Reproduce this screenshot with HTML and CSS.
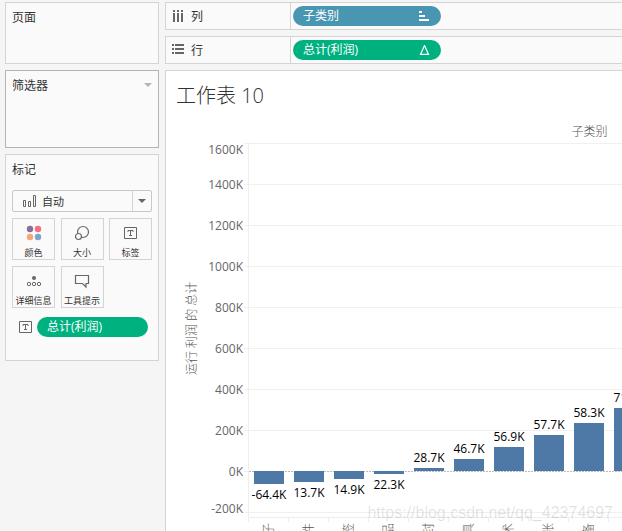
FILE: index.html
```
<!DOCTYPE html>
<html lang="zh-CN">
<head>
  <meta charset="utf-8">
  <title>工作表 10</title>
  <link rel="stylesheet" href="styles.css">
</head>
<body>
  <aside class="sidebar">
    <section class="card pages"><h2>页面</h2></section>
    <section class="card filters">
      <h2>筛选器</h2>
      <button class="card-menu" aria-label="筛选器菜单"><svg width="8" height="4"><path d="M0 0h8L4 4z" fill="#b4b4b4"/></svg></button>
    </section>
    <section class="card marks">
      <h2>标记</h2>
      <div class="mark-type">
        <svg width="14" height="13" fill="none" stroke="#666"><path d="M.5 5.500h2v6h-2zM5.500 6.500h2v5h-2zM10.500 .5h2v11h-2z"/></svg>
        <select aria-label="标记类型"><option>自动</option></select>
        <svg class="arrow" width="8" height="4"><path d="M0 0h8L4 4z" fill="#666"/></svg>
      </div>
      <div class="mark-buttons">
        <button>
          <svg width="16" height="16"><circle cx="4" cy="4" r="3.200" fill="#85709b"/><circle cx="12" cy="4" r="3.200" fill="#fa6c80"/><circle cx="4" cy="12" r="3.200" fill="#f6a678"/><circle cx="12" cy="12" r="3.200" fill="#7fa2ce"/></svg>
          颜色
        </button>
        <button>
          <svg width="16" height="16" fill="none" stroke="#666" stroke-width="1.200"><circle cx="9" cy="7" r="5.500"/><circle cx="4.500" cy="11.500" r="3" fill="#fafafa"/></svg>
          大小
        </button>
        <button>
          <svg width="16" height="16" fill="none" stroke="#666"><path d="M1.500 2.500h12v11h-12zM5 7V5.500h5V7M7.500 5.500v5M6 10.500h3"/></svg>
          标签
        </button>
        <button>
          <svg width="16" height="16" fill="none" stroke="#666"><circle cx="8" cy="5" r="2" fill="#666" stroke="none"/><circle cx="3" cy="11" r="1.700"/><circle cx="8" cy="11" r="1.700"/><circle cx="13" cy="11" r="1.700"/></svg>
          详细信息
        </button>
        <button>
          <svg width="16" height="16" fill="none" stroke="#666" stroke-width="1.200"><path d="M1.500 2.500h13v8h-2.500v3.500L8.500 10.500h-7z"/></svg>
          工具提示
        </button>
      </div>
      <div class="mark-field">
        <svg width="14" height="12" fill="none" stroke="#666"><path d="M.5.5h12v11H.5zM4 5V3.500h5V5M6.500 3.500v5M5 8.500h3"/></svg>
        <button class="pill green">总计(利润)</button>
      </div>
    </section>
  </aside>

  <main>
    <div class="shelf">
      <div class="shelf-name">
        <svg width="12" height="12" fill="#666"><path d="M1 0h2v2H1zM5 0h2v2H5zM9 0h2v2H9zM1 3h2v9H1zM5 3h2v9H5zM9 3h2v9H9z"/></svg>
        列
      </div>
      <button class="pill blue">子类别
        <svg width="12" height="10" fill="#fff"><path d="M0 0h3v2H0zM0 4h6v2H0zM0 8h10v2H0z"/></svg>
      </button>
    </div>
    <div class="shelf">
      <div class="shelf-name">
        <svg width="12" height="12" fill="#666"><path d="M0 0h2v2H0zM0 4h2v2H0zM0 8h2v2H0zM3 0h9v2H3zM3 4h9v2H3zM3 8h9v2H3z"/></svg>
        行
      </div>
      <button class="pill green">总计(利润)
        <svg width="12" height="10" fill="none" stroke="#fff" stroke-width="1.200"><path d="M5.500 .5L9.500 9.400h-8z"/></svg>
      </button>
    </div>

    <section class="sheet">
      <h1>工作表 10</h1>
      <div class="chart">
        <div class="axis-title">运行 利润 的 总计</div>
        <ul class="ticks">
          <li>1600K</li><li>1400K</li><li>1200K</li><li>1000K</li><li>800K</li>
          <li>600K</li><li>400K</li><li>200K</li><li>0K</li><li>-200K</li>
        </ul>
        <div class="view">
          <div class="col-title">子类别</div>
          <div class="plot">
            <div class="cols">
              <div class="col neg"><span class="bar" style="height:13px"></span><span>-64.4K</span></div>
              <div class="col neg"><span class="bar" style="height:11px"></span><span>13.7K</span></div>
              <div class="col neg"><span class="bar" style="height:8px"></span><span>14.9K</span></div>
              <div class="col neg"><span class="bar" style="height:3px"></span><span>22.3K</span></div>
              <div class="col"><span>28.7K</span><span class="bar" style="height:3px"></span></div>
              <div class="col"><span>46.7K</span><span class="bar" style="height:12px"></span></div>
              <div class="col"><span>56.9K</span><span class="bar" style="height:24px"></span></div>
              <div class="col"><span>57.7K</span><span class="bar" style="height:36px"></span></div>
              <div class="col"><span>58.3K</span><span class="bar" style="height:48px"></span></div>
              <div class="col"><span>71.3K</span><span class="bar" style="height:63px"></span></div>
            </div>
          </div>
          <div class="categories">
            <span>桌子</span><span>系固件</span><span>标签</span><span>用品</span><span>信封</span>
            <span>用具</span><span>美术</span><span>纸张</span><span>设备</span>
          </div>
        </div>
      </div>
    </section>
  </main>
  <div class="watermark">https://blog.csdn.net/qq_42374697</div>
</body>
</html>
```
FILE: styles.css
```
* {
  box-sizing: border-box;
}

body {
  margin: 0;
  padding: 2px 0 0 5px;
  height: 100vh;
  overflow: hidden;
  display: flex;
  align-items: stretch;
  gap: 6px;
  background: #f5f5f5;
  color: #333;
  font-family: "Open Sans", "Noto Sans CJK SC", sans-serif;
  font-size: 12px;
}

h1, h2, ul {
  margin: 0;
  padding: 0;
  font-weight: normal;
}

button, select {
  font: inherit;
  color: inherit;
}

svg {
  flex: none;
}

/* left side */
.sidebar {
  flex: none;
  width: 154px;
  display: flex;
  flex-direction: column;
  gap: 6px;
}

.card {
  padding: 6px;
  border: 1px solid #d4d4d4;
  background: #fafafa;
}

.card h2 {
  font-size: 12px;
  line-height: 17px;
}

.pages {
  height: 62px;
}

.filters {
  height: 78px;
  border-color: #b4b4b4;
  display: flex;
  justify-content: space-between;
  align-items: flex-start;
}

.card-menu {
  border: none;
  padding: 0;
  background: none;
  line-height: 12px;
}

.marks {
  height: 207px;
}

.mark-type {
  display: flex;
  align-items: center;
  height: 22px;
  margin-top: 12px;
  padding-left: 10px;
  border: 1px solid #c8c8c8;
  border-radius: 2px;
}

.mark-type select {
  flex: 1;
  height: 20px;
  padding: 0 5px;
  appearance: none;
  border: none;
  border-right: 1px solid #d4d4d4;
  background: none;
  font-size: 11px;
}

.arrow {
  margin: 0 5px;
}

.mark-buttons {
  display: grid;
  grid-template-columns: repeat(3, 43px);
  justify-content: space-between;
  row-gap: 6px;
  margin-top: 6px;
}

.mark-buttons button {
  display: flex;
  flex-direction: column;
  align-items: center;
  justify-content: space-between;
  height: 42px;
  padding: 6px 0 0;
  border: 1px solid #d4d4d4;
  background: #fafafa;
  font-size: 9px;
  line-height: 13px;
  white-space: nowrap;
}

.mark-field {
  display: flex;
  align-items: center;
  gap: 4px;
  margin-top: 9px;
  padding: 0 4px 0 7px;
}

.pill {
  display: flex;
  align-items: center;
  justify-content: space-between;
  height: 20px;
  padding: 0 10px;
  border: none;
  border-radius: 10px;
  color: #fff;
  line-height: 20px;
}

.mark-field .pill {
  flex: 1;
}

.blue {
  background: #4996b2;
}

.green {
  background: #00b180;
}

/* shelves */
main {
  flex: 1;
  min-width: 0;
  display: flex;
  flex-direction: column;
  gap: 6px;
}

.shelf {
  flex: none;
  display: flex;
  align-items: center;
  height: 28px;
  border: 1px solid #d4d4d4;
  border-right: none;
  background: #fafafa;
}

.shelf-name {
  display: flex;
  align-items: center;
  gap: 7px;
  width: 125px;
  height: 26px;
  padding-left: 6px;
  border-right: 1px solid #d4d4d4;
}

.shelf .pill {
  width: 148px;
  margin-left: 2px;
}

/* worksheet */
.sheet {
  flex: 1;
  min-height: 0;
  overflow: hidden;
  padding: 10px 0 0 10px;
  border: 1px solid #d4d4d4;
  border-width: 1px 0 0 1px;
  background: #fff;
}

h1 {
  font-size: 20px;
  line-height: 30px;
  font-weight: 300;
}

.chart {
  display: grid;
  grid-template-columns: 30px 38px 686px;
  margin-top: 13px;
  color: #555;
}

.axis-title {
  display: flex;
  align-items: center;
  justify-content: center;
  height: 370px;
  margin-top: 19px;
  writing-mode: vertical-rl;
  text-orientation: sideways;
  transform: rotate(180deg);
  font-weight: 300;
}

.ticks {
  list-style: none;
  margin-top: 19px;
  padding-right: 1px;
  color: #666;
  text-align: right;
}

.ticks li {
  height: 41px;
  line-height: 41px;
}

.ticks li:first-child {
  height: 21px;
  line-height: 13px;
}

.ticks li:last-child {
  line-height: 34px;
}

.col-title {
  padding-left: 5px;
  height: 19px;
  line-height: 16px;
  text-align: center;
  font-weight: 300;
}

.plot {
  height: 375px;
  padding-left: 4px;
  background: repeating-linear-gradient(#f0f0f0 0 1px, transparent 1px 41px);
}

.cols {
  display: flex;
  height: 375px;
  border-left: 1px solid #eee;
  border-bottom: 1px solid #eee;
  /* dashed zero line */
  background: repeating-linear-gradient(90deg, #bbb 0 2px, #fff 2px 3px) 0 328px / 100% 1px no-repeat;
}

.col {
  display: flex;
  flex-direction: column;
  align-items: center;
  justify-content: flex-end;
  width: 40px;
  height: 328px;
  color: #000;
  line-height: 21px;
  white-space: nowrap;
}

.col.neg {
  justify-content: flex-start;
  height: 46px;
  margin-top: 328px;
}

.bar {
  flex: none;
  width: 30px;
  background: #4e79a7;
}

.categories {
  display: flex;
  padding-left: 4px;
  background: repeating-linear-gradient(90deg, #eee 0 1px, transparent 1px 40px) 4px 0 / 100% 4px no-repeat;
}

.categories span {
  display: flex;
  align-items: center;
  justify-content: flex-end;
  width: 40px;
  height: 50px;
  padding-bottom: 5px;
  writing-mode: vertical-rl;
  text-orientation: sideways;
  transform: rotate(180deg);
  font-weight: 300;
}

.watermark {
  position: absolute;
  right: 9px;
  bottom: 8px;
  color: rgba(0, 0, 0, 0.12);
  font-family: "Liberation Sans", sans-serif;
  font-size: 16px;
  line-height: 20px;
}
```
